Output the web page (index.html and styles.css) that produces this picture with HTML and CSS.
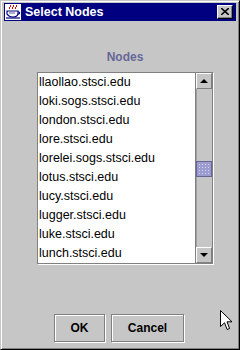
FILE: index.html
```html
<!DOCTYPE html>
<html>
<head>
    <title>Select Nodes</title>
    <link rel="stylesheet" href="styles.css">
</head>
<body>

    <div class="window">
        <div class="titlebar">
            <svg class="title-icon" width="16" height="16" viewBox="0 0 16 16">
                <rect x="0" y="0" width="16" height="16" fill="#fff"/>
                <path d="M5 1 q2 1 0 2 q-2 1 0 2 M8 1 q2 1 0 2 q-2 1 0 2 M11 1 q2 1 0 2 q-2 1 0 2" fill="none" stroke="#e00000" stroke-width="1"/>
                <path d="M2 7 h11 v3 q-1 3 -5 3 q-4 0 -6 -3 z" fill="none" stroke="#000080" stroke-width="1.2"/>
                <path d="M13 8 h1.5 v2 h-2" fill="none" stroke="#000080" stroke-width="1"/>
                <path d="M1 14 h14" stroke="#000080" stroke-width="1.2"/>
                <path d="M4 9 h6" stroke="#5a5aa8" stroke-width="1"/>
            </svg>
            <span class="title-text">Select Nodes</span>
            <span class="close-btn">
                <svg width="8" height="7" viewBox="0 0 8 7">
                    <path d="M0 0 L8 7 M8 0 L0 7" stroke="#000" stroke-width="1.6"/>
                </svg>
            </span>
        </div>

        <div class="content">
            <div class="list-area">
                <div class="list-label">Nodes</div>
                <div class="listbox">
                    <ul class="items">
                        <li>llaollao.stsci.edu</li>
                        <li>loki.sogs.stsci.edu</li>
                        <li>london.stsci.edu</li>
                        <li>lore.stsci.edu</li>
                        <li>lorelei.sogs.stsci.edu</li>
                        <li>lotus.stsci.edu</li>
                        <li>lucy.stsci.edu</li>
                        <li>lugger.stsci.edu</li>
                        <li>luke.stsci.edu</li>
                        <li>lunch.stsci.edu</li>
                    </ul>
                    <div class="scrollbar">
                        <div class="arrow-btn"><span class="tri up"></span></div>
                        <div class="track">
                            <div class="thumb"></div>
                        </div>
                        <div class="arrow-btn"><span class="tri down"></span></div>
                    </div>
                </div>
            </div>

            <div class="buttons">
                <button class="btn ok">OK</button>
                <button class="btn cancel">Cancel</button>
            </div>
        </div>

        <svg class="cursor" width="13" height="21" viewBox="0 0 13 21">
            <path d="M0.5 0.5 L0.5 16.5 L4.5 12.8 L7.2 19.5 L9.6 18.5 L7 11.8 L12 11.8 Z" fill="#fff" stroke="#000" stroke-width="1"/>
        </svg>
    </div>

</body>
</html>
```

FILE: styles.css
```css
body {
    margin: 0;
    font-family: "Liberation Sans", Arial, sans-serif;
    background: #c6c6c6;
}
.window {
    position: relative;
    width: 240px;
    height: 350px;
    box-sizing: border-box;
    background: #c6c6c6;
    border: 1px solid;
    border-color: #c6c6c6 #000 #000 #c6c6c6;
    box-shadow: inset 1px 1px #fff, inset -1px -1px #808080;
    padding: 2px;
    display: flex;
    flex-direction: column;
}
.titlebar {
    height: 18px;
    margin: 0 1px;
    background: #000080;
    display: flex;
    align-items: center;
    padding: 0 3px 0 1px;
}
.title-icon {
    display: block;
    margin-right: 4px;
}
.title-text {
    color: #fff;
    font-weight: bold;
    font-size: 12.5px;
    flex: 1;
}
.close-btn {
    width: 16px;
    height: 14px;
    box-sizing: border-box;
    background: #c6c6c6;
    border: 1px solid;
    border-color: #fff #000 #000 #fff;
    box-shadow: inset -1px -1px #808080;
    display: flex;
    align-items: center;
    justify-content: center;
    padding-bottom: 1px;
}
.close-btn svg {
    display: block;
}
.content {
    flex: 1;
    display: flex;
    flex-direction: column;
}
.list-area {
    margin: 29px 0 0 34px;
    width: 176px;
}
.list-label {
    text-align: center;
    font-weight: bold;
    font-size: 12px;
    line-height: 15px;
    color: #666699;
    margin-bottom: 7px;
}
.listbox {
    height: 192px;
    box-sizing: border-box;
    border: 1px solid #808080;
    box-shadow: 1px 1px #fff;
    background: #fff;
    display: flex;
}
.items {
    flex: 1;
    list-style: none;
    margin: 0;
    padding: 0;
}
.items li {
    height: 19px;
    line-height: 19px;
    font-size: 12.5px;
    padding-left: 1px;
    color: #000;
    white-space: nowrap;
}
.scrollbar {
    width: 16px;
    background: #c6c6c6;
    box-shadow: -1px 0 #808080;
    display: flex;
    flex-direction: column;
}
.arrow-btn {
    height: 16px;
    box-sizing: border-box;
    border: 1px solid;
    border-color: #fff #808080 #808080 #fff;
    background: #c6c6c6;
    display: flex;
    align-items: center;
    justify-content: center;
}
.tri {
    width: 0;
    height: 0;
    border-left: 4px solid transparent;
    border-right: 4px solid transparent;
}
.tri.up {
    border-bottom: 4px solid #000;
}
.tri.down {
    border-top: 4px solid #000;
}
.track {
    flex: 1;
    padding-top: 72px;
    box-shadow: inset 1px 0 #a0a0a0;
}
.thumb {
    height: 16px;
    box-sizing: border-box;
    border: 1px solid #666699;
    background-color: #9c9cce;
    background-image: radial-gradient(#d6d6ff 0.6px, transparent 0.8px);
    background-size: 3px 3px;
    background-position: 1px 1px;
}
.buttons {
    margin-top: auto;
    margin-bottom: 5px;
    display: flex;
    justify-content: center;
    gap: 6px;
    padding-right: 2px;
}
.btn {
    height: 28px;
    box-sizing: border-box;
    font-family: "Liberation Sans", Arial, sans-serif;
    font-size: 12px;
    font-weight: bold;
    color: #000;
    background: #c6c6c6;
    border: 1px solid #808080;
    box-shadow: 1px 1px #fff, inset 1px 1px #fff;
    padding: 0;
}
.ok {
    width: 51px;
}
.cancel {
    width: 73px;
}
.cursor {
    position: absolute;
    left: 219px;
    top: 309px;
}
```
